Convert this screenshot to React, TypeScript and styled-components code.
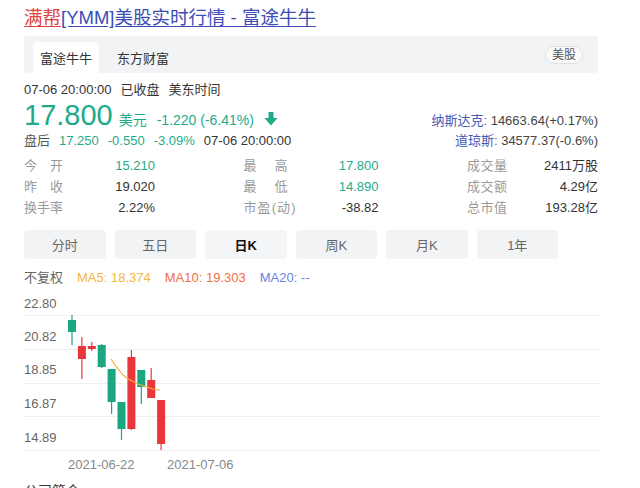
import React from "react";
import styled, { createGlobalStyle } from "styled-components";

const Global = createGlobalStyle`
  html, body { margin: 0; padding: 0; background: #fff; }
  body { font-family: "Liberation Sans", "Noto Sans CJK SC", sans-serif; color: #333; overflow: hidden; }
`;

const GREEN = "#1fab89";
const RED = "#e8363a";

const Page = styled.div`
  width: 640px;
  height: 488px;
  overflow: hidden;
  box-sizing: border-box;
  padding: 7px 42px 0 24px;
`;

const Title = styled.div`
  font-size: 18.5px;
  line-height: 22px;
  white-space: nowrap;
`;

const TitleLink = styled.a<{ $red?: boolean }>`
  color: ${(p) => (p.$red ? "#e0443c" : "#3c4db5")};
  text-decoration: underline;
  text-underline-offset: 2px;
`;

const TabBar = styled.div`
  margin-top: 7px;
  height: 37px;
  background: #f2f3f5;
  border-radius: 4px;
  display: flex;
  align-items: flex-end;
  padding: 0 15px 0 9px;
  box-sizing: border-box;
`;

const SourceTab = styled.div<{ $active?: boolean }>`
  height: 31px;
  padding: 0 7px;
  display: flex;
  align-items: center;
  font-size: 13px;
  color: #333;
  background: ${(p) => (p.$active ? "#fff" : "transparent")};
  border-radius: 4px 4px 0 0;
  margin-right: 11px;
`;

const Pill = styled.div`
  margin-left: auto;
  align-self: center;
  font-size: 12px;
  line-height: 16px;
  padding: 0 6px;
  color: #555;
  border: 1px solid #e0e0e0;
  background: #fafafa;
  border-radius: 9px;
`;

const DateLine = styled.div`
  margin-top: 8px;
  font-size: 13px;
  line-height: 18px;
  color: #333;
  display: flex;
  gap: 9px;
`;

const QuoteRow = styled.div`
  display: flex;
  justify-content: space-between;
  align-items: baseline;
`;

const BigPrice = styled.span`
  font-size: 29px;
  line-height: 32px;
  color: ${GREEN};
  margin-right: 6px;
`;

const Unit = styled.span`
  font-size: 14px;
  color: ${GREEN};
  margin-right: 10px;
`;

const Change = styled.span`
  font-size: 14px;
  color: ${GREEN};
  margin-right: 10px;
`;

const Arrow = styled.svg`
  width: 14px;
  height: 14px;
  vertical-align: -1px;
`;

const Index = styled.div`
  font-size: 13px;
  line-height: 20px;
  color: #444;
  white-space: nowrap;
`;

const IndexName = styled.span`
  color: #4659b8;
`;

const AfterLine = styled.div`
  font-size: 13px;
  line-height: 20px;
  display: flex;
  gap: 9px;
  color: #333;
`;

const Muted = styled.span`
  color: #555;
`;

const GreenText = styled.span`
  color: ${GREEN};
`;

const Stats = styled.div`
  margin-top: 4px;
  display: grid;
  grid-template-columns: 131px 135px 131px;
  column-gap: 88.5px;
  font-size: 13px;
  line-height: 21px;
`;

const Stat = styled.div`
  display: flex;
  justify-content: space-between;
`;

const StatLabel = styled.span<{ $w: number }>`
  color: #9a9a9a;
  width: ${(p) => p.$w}px;
  text-align: justify;
  text-align-last: justify;
  white-space: nowrap;
`;

const StatValue = styled.span<{ $green?: boolean }>`
  color: ${(p) => (p.$green ? GREEN : "#333")};
`;

const Periods = styled.div`
  margin-top: 12px;
  display: flex;
  gap: 9px;
`;

const Period = styled.div<{ $active?: boolean }>`
  width: 81.5px;
  height: 29px;
  border-radius: 4px;
  background: ${(p) => (p.$active ? "#f4f5f7" : "#f2f3f5")};
  display: flex;
  align-items: center;
  justify-content: center;
  font-size: 13px;
  color: ${(p) => (p.$active ? "#111" : "#666")};
  font-weight: ${(p) => (p.$active ? 700 : 400)};
`;

const MaRow = styled.div`
  margin-top: 10px;
  font-size: 13px;
  line-height: 18px;
  display: flex;
  gap: 14px;
`;

const Ma = styled.span<{ $c: string }>`
  color: ${(p) => p.$c};
`;

const Chart = styled.svg`
  display: block;
  width: 576px;
  height: 192px;
  font-family: "Liberation Sans", sans-serif;
`;

const Section = styled.div`
  margin-top: 3px;
  font-size: 14px;
  line-height: 18px;
  color: #333;
`;

type Candle = { bt: number; bb: number; wt: number; wb: number; up: boolean };
const candles: Candle[] = [
  { bt: 323, bb: 335, wt: 318, wb: 348, up: true },
  { bt: 349, bb: 362, wt: 340, wb: 382, up: false },
  { bt: 349, bb: 352, wt: 345, wb: 354, up: false },
  { bt: 348, bb: 370, wt: 347, wb: 371, up: true },
  { bt: 372, bb: 405, wt: 372, wb: 417, up: true },
  { bt: 405, bb: 432, wt: 405, wb: 443, up: true },
  { bt: 360, bb: 432, wt: 353, wb: 433, up: false },
  { bt: 373, bb: 390, wt: 373, wb: 407, up: true },
  { bt: 383, bb: 401, wt: 371, wb: 401, up: false },
  { bt: 403, bb: 447, wt: 403, wb: 453, up: false },
];

const grid = [318, 352, 386, 419, 453];
const yLabels = [
  { t: "22.80", y: 311 },
  { t: "20.82", y: 344 },
  { t: "18.85", y: 377 },
  { t: "16.87", y: 411 },
  { t: "14.89", y: 445 },
];

const stats = [
  { l: "今开", v: "15.210", g: true, w: 39 },
  { l: "最高", v: "17.800", g: true, w: 44 },
  { l: "成交量", v: "2411万股", w: 40 },
  { l: "昨收", v: "19.020", w: 39 },
  { l: "最低", v: "14.890", g: true, w: 44 },
  { l: "成交额", v: "4.29亿", w: 40 },
  { l: "换手率", v: "2.22%", w: 39 },
  { l: "市盈(动)", v: "-38.82", w: 52 },
  { l: "总市值", v: "193.28亿", w: 40 },
];

const periods = ["分时", "五日", "日K", "周K", "月K", "1年"];

export default function App() {
  return (
    <>
      <Global />
      <Page>
        <Title>
          <TitleLink $red>满帮</TitleLink>
          <TitleLink>[YMM]美股实时行情 - 富途牛牛</TitleLink>
        </Title>
        <TabBar>
          <SourceTab $active>富途牛牛</SourceTab>
          <SourceTab>东方财富</SourceTab>
          <Pill>美股</Pill>
        </TabBar>
        <DateLine>
          <span>07-06 20:00:00</span>
          <span>已收盘</span>
          <span>美东时间</span>
        </DateLine>
        <QuoteRow>
          <div>
            <BigPrice>17.800</BigPrice>
            <Unit>美元</Unit>
            <Change>-1.220 (-6.41%)</Change>
            <Arrow viewBox="0 0 14 14">
              <rect x="4.5" y="0" width="5" height="7" fill={GREEN} />
              <polygon points="0.5,6 13.5,6 7,13.5" fill={GREEN} />
            </Arrow>
          </div>
          <Index>
            <IndexName>纳斯达克:</IndexName> 14663.64(+0.17%)
          </Index>
        </QuoteRow>
        <QuoteRow>
          <AfterLine>
            <Muted>盘后</Muted>
            <GreenText>17.250</GreenText>
            <GreenText>-0.550</GreenText>
            <GreenText>-3.09%</GreenText>
            <span>07-06 20:00:00</span>
          </AfterLine>
          <Index>
            <IndexName>道琼斯:</IndexName> 34577.37(-0.6%)
          </Index>
        </QuoteRow>
        <Stats>
          {stats.map((s) => (
            <Stat key={s.l}>
              <StatLabel $w={s.w}>{s.l}</StatLabel>
              <StatValue $green={s.g}>{s.v}</StatValue>
            </Stat>
          ))}
        </Stats>
        <Periods>
          {periods.map((p) => (
            <Period key={p} $active={p === "日K"}>
              {p}
            </Period>
          ))}
        </Periods>
        <MaRow>
          <Ma $c="#666">不复权</Ma>
          <Ma $c="#f3b73f">MA5: 18.374</Ma>
          <Ma $c="#f26f47">MA10: 19.303</Ma>
          <Ma $c="#6f7fe3">MA20: --</Ma>
        </MaRow>
        <Chart viewBox="24 290 576 192">
          {grid.map((y) => (
            <line key={y} x1={23} x2={600} y1={y + 0.5} y2={y + 0.5} stroke="#efefef" strokeWidth={1} />
          ))}
          {yLabels.map((l) => (
            <text key={l.t} x={24} y={l.y} fontSize={13} fill="#666">
              {l.t}
            </text>
          ))}
          {candles.map((c, i) => {
            const x = 68 + i * 9.9;
            const col = c.up ? "#1aa680" : RED;
            return (
              <g key={i}>
                <line x1={x + 4} x2={x + 4} y1={c.wt} y2={c.wb} stroke={col} strokeWidth={1.2} />
                <rect x={x} y={c.bt} width={8} height={Math.max(2, c.bb - c.bt)} fill={col} />
              </g>
            );
          })}
          <polyline
            points="111,362 115,368 123,378 128,382 138,387 147,390 153,392 160,393"
            fill="none"
            stroke="#f5b041"
            strokeWidth={1.2}
          />
          <text x={68} y={472} fontSize={13} fill="#888">2021-06-22</text>
          <text x={167} y={472} fontSize={13} fill="#888">2021-07-06</text>
        </Chart>
        <Section>公司简介</Section>
      </Page>
    </>
  );
}
